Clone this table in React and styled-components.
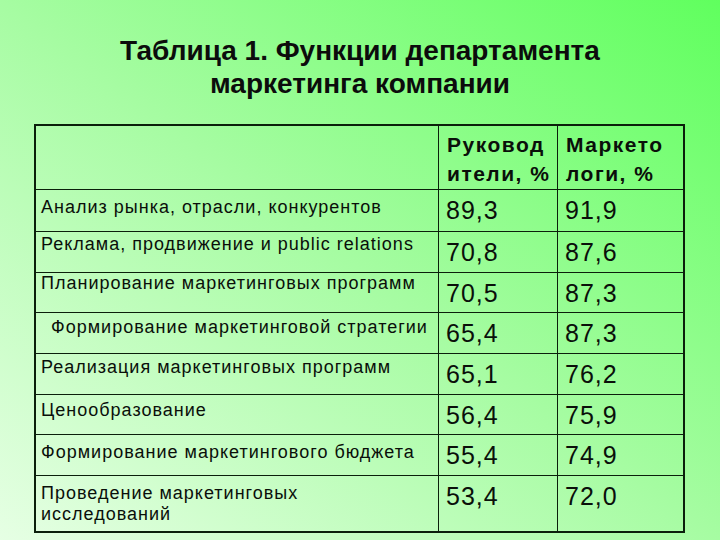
import React from "react";
import styled, { createGlobalStyle } from "styled-components";

const Global = createGlobalStyle`
  html, body { margin: 0; padding: 0; }
  body { width: 720px; height: 540px; overflow: hidden; }
  #root { width: 720px; height: 540px; }
`;

const Slide = styled.div`
  width: 720px;
  height: 540px;
  box-sizing: border-box;
  background: linear-gradient(to top right, #e6ffe4 0%, #a6fca2 50%, #60ff5e 100%);
  font-family: "Liberation Sans", Arial, sans-serif;
  color: #0a0f0a;
  padding-top: 34px;
  display: flex;
  flex-direction: column;
`;

const Title = styled.h1`
  margin: 0;
  font-size: 28px;
  line-height: 33px;
  font-weight: 700;
  text-align: center;
  color: #0c0c0c;
`;

const Table = styled.div`
  margin: 24px 0 0 34px;
  width: 651px;
  box-sizing: border-box;
  border: 2px solid #0b1f0b;
  display: grid;
  grid-template-columns: 403px 119px 1fr;
  grid-template-rows: ${(p) => p.$rows};
`;

const Cell = styled.div`
  box-sizing: border-box;
  border-right: ${(p) => (p.$last ? "none" : "1px solid #0b1f0b")};
  border-bottom: ${(p) => (p.$bottom ? "none" : "1px solid #0b1f0b")};
  min-width: 0;
  overflow: hidden;
`;

const HeadCell = styled(Cell)`
  padding: 4px 0 0 8px;
  font-size: 21px;
  line-height: 29px;
  font-weight: 700;
  letter-spacing: 1.5px;
  white-space: nowrap;
`;

const LabelCell = styled(Cell)`
  padding: ${(p) => p.$pt}px 0 0 ${(p) => 5 + (p.$indent || 0)}px;
  font-size: 18px;
  line-height: 21px;
  letter-spacing: 1px;
  white-space: nowrap;
`;

const NumCell = styled(Cell)`
  padding: 6px 0 0 7px;
  font-size: 25px;
  line-height: 28px;
  letter-spacing: 1px;
`;

const rows = [
  { label: "Анализ рынка, отрасли, конкурентов", a: "89,3", b: "91,9", h: 42, pt: 7 },
  { label: "Реклама, продвижение и public relations", a: "70,8", b: "87,6", h: 41, pt: 2 },
  { label: "Планирование маркетинговых программ", a: "70,5", b: "87,3", h: 40, pt: 0 },
  { label: "Формирование маркетинговой стратегии", a: "65,4", b: "87,3", h: 41, pt: 4, indent: 10 },
  { label: "Реализация маркетинговых программ", a: "65,1", b: "76,2", h: 41, pt: 3 },
  { label: "Ценообразование", a: "56,4", b: "75,9", h: 40, pt: 5 },
  { label: "Формирование маркетингового бюджета", a: "55,4", b: "74,9", h: 41, pt: 7 },
  { label: ["Проведение маркетинговых", "исследований"], a: "53,4", b: "72,0", h: 55, pt: 7 },
];

export default function App() {
  const rowTemplate = ["64px", ...rows.map((r) => `${r.h}px`)].join(" ");
  return (
    <>
      <Global />
      <Slide>
        <Title>
          Таблица 1. Функции департамента
          <br />
          маркетинга компании
        </Title>
        <Table $rows={rowTemplate}>
          <HeadCell />
          <HeadCell>
            Руковод
            <br />
            ители, %
          </HeadCell>
          <HeadCell $last>
            Маркето
            <br />
            логи, %
          </HeadCell>
          {rows.map((r, i) => {
            const bottom = i === rows.length - 1;
            return (
              <React.Fragment key={i}>
                <LabelCell $pt={r.pt} $indent={r.indent} $bottom={bottom}>
                  {Array.isArray(r.label) ? (
                    <>
                      {r.label[0]}
                      <br />
                      {r.label[1]}
                    </>
                  ) : (
                    r.label
                  )}
                </LabelCell>
                <NumCell $bottom={bottom}>{r.a}</NumCell>
                <NumCell $bottom={bottom} $last>
                  {r.b}
                </NumCell>
              </React.Fragment>
            );
          })}
        </Table>
      </Slide>
    </>
  );
}
